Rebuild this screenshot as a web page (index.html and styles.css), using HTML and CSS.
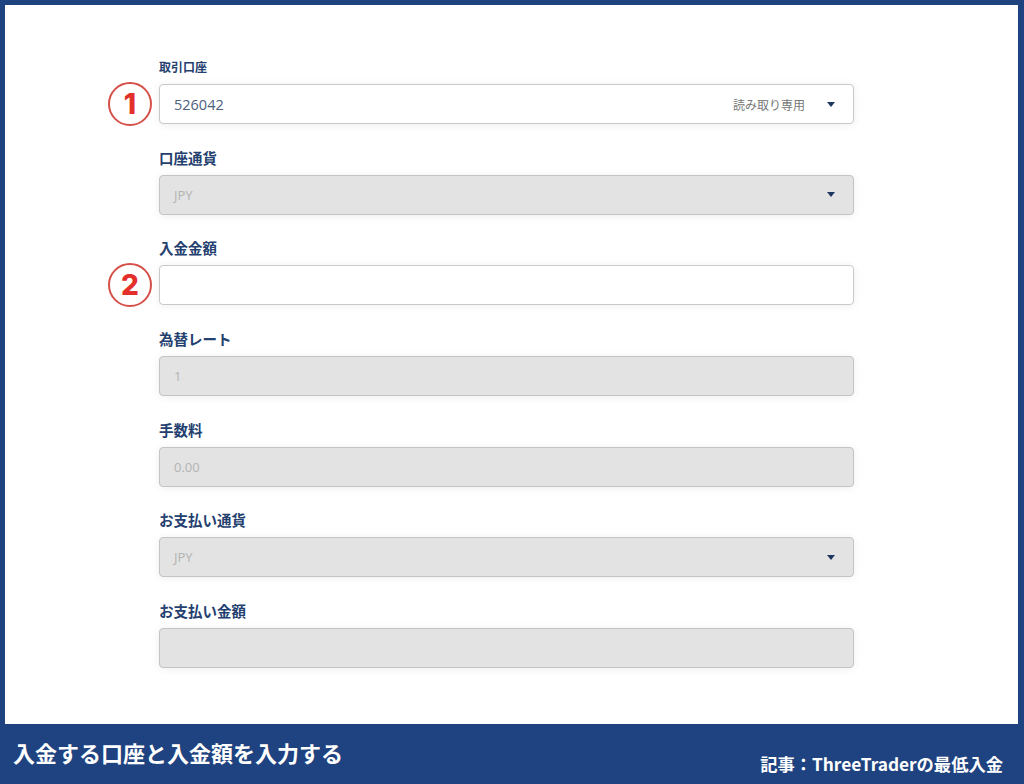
FILE: index.html
```html
<!DOCTYPE html>
<html lang="ja">
<head>
<meta charset="utf-8">
<link rel="stylesheet" href="styles.css">
</head>
<body>
<div class="frame">
  <main class="panel">
    <form class="form">
      <div class="group">
        <div class="label small">取引口座</div>
        <div class="row">
          <span class="badge">1</span>
          <div class="field white">
            <span class="value">526042</span>
            <span class="ro">読み取り専用</span>
            <span class="caret"></span>
          </div>
        </div>
      </div>
      <div class="group">
        <div class="label">口座通貨</div>
        <div class="row">
          <div class="field gray"><span class="ph">JPY</span><span class="caret"></span></div>
        </div>
      </div>
      <div class="group">
        <div class="label">入金金額</div>
        <div class="row">
          <span class="badge">2</span>
          <div class="field white"></div>
        </div>
      </div>
      <div class="group">
        <div class="label">為替レート</div>
        <div class="row"><div class="field gray"><span class="ph">1</span></div></div>
      </div>
      <div class="group">
        <div class="label">手数料</div>
        <div class="row"><div class="field gray"><span class="ph">0.00</span></div></div>
      </div>
      <div class="group">
        <div class="label">お支払い通貨</div>
        <div class="row"><div class="field gray"><span class="ph">JPY</span><span class="caret"></span></div></div>
      </div>
      <div class="group">
        <div class="label">お支払い金額</div>
        <div class="row"><div class="field gray"></div></div>
      </div>
    </form>
  </main>
  <footer class="bar">
    <div class="caption">入金する口座と入金額を入力する</div>
    <div class="source">記事：ThreeTraderの最低入金</div>
  </footer>
</div>
</body>
</html>
```

FILE: styles.css
```css
* { box-sizing: border-box; }
html, body { margin: 0; padding: 0; }
body {
  width: 1024px;
  height: 784px;
  overflow: hidden;
  font-family: "Noto Sans CJK JP", "Noto Sans", sans-serif;
  background: #1f4380;
}
.frame {
  width: 1024px;
  height: 784px;
  display: flex;
  flex-direction: column;
  padding: 5px 6px 0 5px;
}
.panel {
  height: 719px;
  background: #ffffff;
  padding: 53px 0 0 154px;
}
.form {
  width: 695px;
  display: flex;
  flex-direction: column;
  gap: 24.7px;
}
.group { display: flex; flex-direction: column; }
.label {
  height: 18px;
  line-height: 18px;
  margin-bottom: 8px;
  font-size: 14.5px;
  font-weight: 700;
  color: #24406f;
}
.label.small { font-size: 12px; }
.row { position: relative; }
.field {
  height: 40px;
  border-radius: 4px;
  display: flex;
  align-items: center;
  padding: 0 14px;
  box-shadow: 0 1px 8px rgba(0,0,0,0.07);
}
.field.white { background: #fff; border: 1px solid #c9c9c9; }
.field.gray { background: #e3e3e3; border: 1px solid #c4c4c4; }
.value { font-size: 14.5px; color: #4d5f7d; font-family: "Open Sans", "Noto Sans", sans-serif; }
.ph { font-size: 13px; color: #b3b3b3; font-family: "Open Sans", "Noto Sans", sans-serif; }
.ro { margin-left: auto; font-size: 12px; color: #777; margin-right: 22px; }
.caret {
  margin-left: auto;
  width: 0; height: 0;
  border-left: 4.5px solid transparent;
  border-right: 4.5px solid transparent;
  border-top: 5px solid #1e3760;
  margin-right: 4px;
}
.ro + .caret { margin-left: 0; }
.badge {
  position: absolute;
  left: -51px;
  top: -2px;
  width: 44px;
  height: 44px;
  border: 2px solid #d6504a;
  border-radius: 50%;
  color: #e3302a;
  font-family: Inter, "Open Sans", sans-serif;
  font-weight: 800;
  font-size: 28px;
  line-height: 40px;
  text-align: center;
}
.bar {
  flex: 1;
  position: relative;
  color: #fff;
  font-weight: 700;
}
.caption {
  position: absolute;
  left: 8px;
  top: 13px;
  font-size: 22px;
  line-height: 30px;
}
.source {
  position: absolute;
  right: 15px;
  top: 28px;
  font-size: 17.3px;
  line-height: 24px;
}
```
